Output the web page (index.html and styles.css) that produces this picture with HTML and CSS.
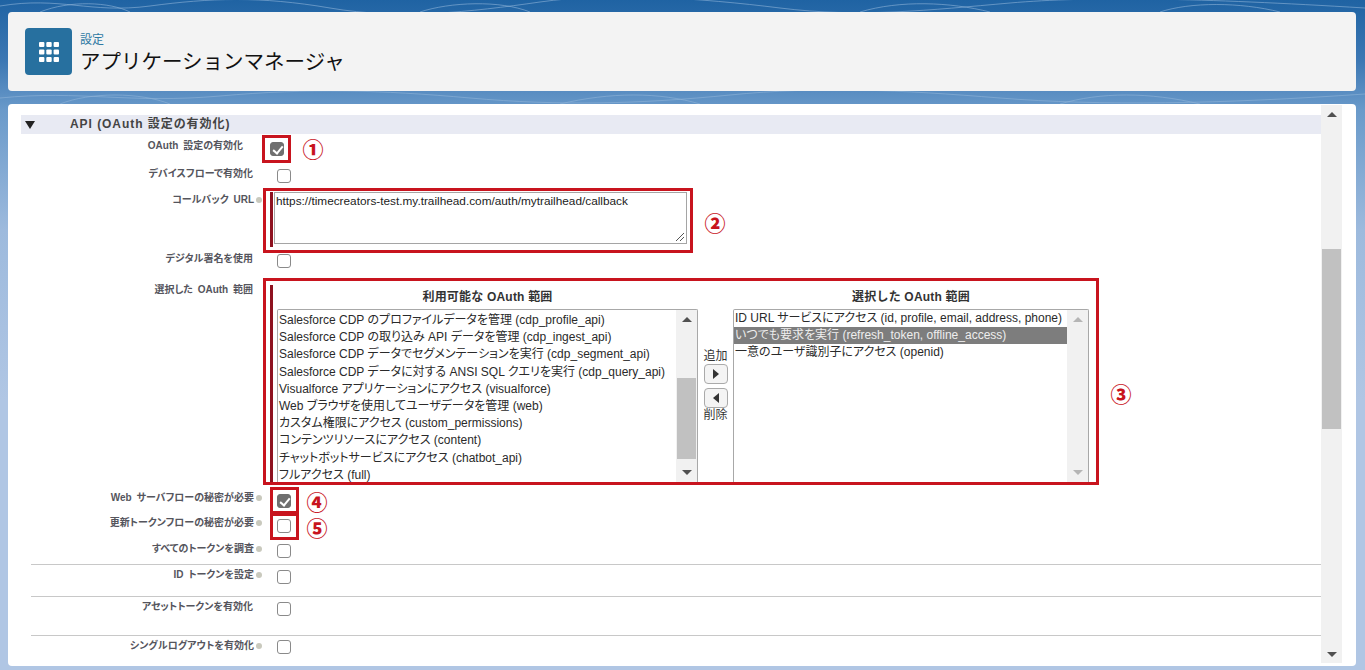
FILE: index.html
```html
<!DOCTYPE html>
<html lang="ja">
<head>
    <meta charset="UTF-8">
    <meta name="viewport" content="width=device-width, initial-scale=1.0">
    <title>アプリケーションマネージャ</title>
    <link rel="stylesheet" href="styles.css">
</head>
<body>
    <svg class="contours" width="1365" height="670" viewBox="0 0 1365 670" aria-hidden="true">
        <path d="M0 6 C60 -4 90 14 150 6 S260 -4 330 8 S470 12 540 2 S700 -2 780 8 S930 10 1010 3 S1200 -2 1365 8"/>
        <path d="M40 12 C70 0 110 2 130 12 M420 12 C450 2 500 0 530 12 M860 12 C900 0 950 2 990 12 M1160 12 C1190 2 1240 2 1280 12"/>
        <path d="M0 98 C80 90 130 104 220 96 S380 90 470 98 S640 104 730 95 S900 90 1000 98 S1220 104 1365 94"/>
        <path d="M60 104 C90 92 140 92 170 104 M560 104 C610 92 660 92 700 104 M1060 104 C1100 92 1150 92 1200 104"/>
    </svg>
    <div class="page">
        <div class="page-header">
            <div class="header-icon">
                <svg width="20" height="20" viewBox="0 0 20 20">
                    <rect x="0" y="0" width="5.4" height="5" rx="1"/><rect x="7.3" y="0" width="5.4" height="5" rx="1"/><rect x="14.6" y="0" width="5.4" height="5" rx="1"/>
                    <rect x="0" y="7.5" width="5.4" height="5" rx="1"/><rect x="7.3" y="7.5" width="5.4" height="5" rx="1"/><rect x="14.6" y="7.5" width="5.4" height="5" rx="1"/>
                    <rect x="0" y="15" width="5.4" height="5" rx="1"/><rect x="7.3" y="15" width="5.4" height="5" rx="1"/><rect x="14.6" y="15" width="5.4" height="5" rx="1"/>
                </svg>
            </div>
            <div>
                <div class="header-sub">設定</div>
                <h1>アプリケーションマネージャ</h1>
            </div>
        </div>

        <div class="main-card">
            <div class="content">
                <div class="section-head">
                    <span class="section-arrow"></span>
                    <span>API (OAuth 設定の有効化)</span>
                </div>

                <div class="row row-oauth">
                    <div class="label">OAuth 設定の有効化</div>
                    <div class="value"><span class="check checked"></span></div>
                </div>
                <div class="row row-device">
                    <div class="label">デバイスフローで有効化</div>
                    <div class="value"><span class="check"></span></div>
                </div>
                <div class="row row-callback">
                    <div class="label">コールバック URL<i class="help"></i></div>
                    <div class="value required">
                        <div class="textarea">https://timecreators-test.my.trailhead.com/auth/mytrailhead/callback
                            <svg class="grip" width="11" height="11" viewBox="0 0 11 11"><path d="M10 2 L2 10 M10 6 L6 10"/></svg>
                        </div>
                    </div>
                </div>
                <div class="row row-signature">
                    <div class="label">デジタル署名を使用</div>
                    <div class="value"><span class="check"></span></div>
                </div>
                <div class="row row-scopes">
                    <div class="label">選択した OAuth 範囲</div>
                    <div class="value required scopes">
                        <div class="scope-col scope-left">
                            <div class="scope-title">利用可能な OAuth 範囲</div>
                            <div class="listbox">
                                <div class="options">
                                    <div>Salesforce CDP のプロファイルデータを管理 (cdp_profile_api)</div>
                                    <div>Salesforce CDP の取り込み API データを管理 (cdp_ingest_api)</div>
                                    <div>Salesforce CDP データでセグメンテーションを実行 (cdp_segment_api)</div>
                                    <div>Salesforce CDP データに対する ANSI SQL クエリを実行 (cdp_query_api)</div>
                                    <div>Visualforce アプリケーションにアクセス (visualforce)</div>
                                    <div>Web ブラウザを使用してユーザデータを管理 (web)</div>
                                    <div>カスタム権限にアクセス (custom_permissions)</div>
                                    <div>コンテンツリソースにアクセス (content)</div>
                                    <div>チャットボットサービスにアクセス (chatbot_api)</div>
                                    <div>フルアクセス (full)</div>
                                </div>
                                <div class="list-scroll">
                                    <span class="arrow-up"></span>
                                    <span class="list-thumb"></span>
                                    <span class="arrow-down"></span>
                                </div>
                            </div>
                        </div>
                        <div class="move-buttons">
                            <div>追加</div>
                            <div class="move-btn"><span class="arrow-right"></span></div>
                            <div class="move-btn"><span class="arrow-left"></span></div>
                            <div>削除</div>
                        </div>
                        <div class="scope-col scope-right">
                            <div class="scope-title">選択した OAuth 範囲</div>
                            <div class="listbox">
                                <div class="options">
                                    <div>ID URL サービスにアクセス (id, profile, email, address, phone)</div>
                                    <div class="selected">いつでも要求を実行 (refresh_token, offline_access)</div>
                                    <div>一意のユーザ識別子にアクセス (openid)</div>
                                </div>
                                <div class="list-scroll disabled">
                                    <span class="arrow-up"></span>
                                    <span class="arrow-down"></span>
                                </div>
                            </div>
                        </div>
                    </div>
                </div>
                <div class="row row-web">
                    <div class="label">Web サーバフローの秘密が必要<i class="help"></i></div>
                    <div class="value"><span class="check checked"></span></div>
                </div>
                <div class="row row-refresh">
                    <div class="label">更新トークンフローの秘密が必要<i class="help"></i></div>
                    <div class="value"><span class="check"></span></div>
                </div>
                <div class="row row-intro divided">
                    <div class="label">すべてのトークンを調査<i class="help"></i></div>
                    <div class="value"><span class="check"></span></div>
                </div>
                <div class="row row-idtoken divided">
                    <div class="label">ID トークンを設定<i class="help"></i></div>
                    <div class="value"><span class="check"></span></div>
                </div>
                <div class="row row-asset divided">
                    <div class="label">アセットトークンを有効化</div>
                    <div class="value"><span class="check"></span></div>
                </div>
                <div class="row row-logout">
                    <div class="label">シングルログアウトを有効化<i class="help"></i></div>
                    <div class="value"><span class="check"></span></div>
                </div>
            </div>

            <div class="page-scroll">
                <span class="arrow-up"></span>
                <span class="page-thumb"></span>
                <span class="arrow-down"></span>
            </div>

            <!-- red annotations drawn over the form -->
            <div class="mark mark-1"></div><div class="num num-1">①</div>
            <div class="mark mark-2"></div><div class="num num-2">②</div>
            <div class="mark mark-3"></div><div class="num num-3">③</div>
            <div class="mark mark-4"></div><div class="num num-4">④</div>
            <div class="mark mark-5"></div><div class="num num-5">⑤</div>
        </div>
    </div>
</body>
</html>
```

FILE: styles.css
```css
html, body {
    height: 100%;
}
body {
    margin: 0;
    height: 670px;
    overflow: hidden;
    position: relative;
    font-family: "Liberation Sans", "Noto Sans CJK JP", sans-serif;
    color: #222;
    background: linear-gradient(180deg, #1f63a3 0, #3c77b3 60px, #6a9aca 110px, #9dbadd 230px, #b0c6e4 400px, #b0c6e4 670px);
}
.contours {
    position: absolute;
    left: 0;
    top: 0;
}
.contours path {
    fill: none;
    stroke: #8fb4d8;
    stroke-width: 1;
    opacity: 0.6;
}
.page {
    position: relative;
    padding: 12px 9px 0 8px;
}

/* header */
.page-header {
    height: 79px;
    box-sizing: border-box;
    padding: 16px 0 0 17px;
    display: flex;
    gap: 8px;
    background-color: #f3f3f3;
    border-radius: 4px;
    margin-bottom: 13px;
}
.header-icon {
    width: 47px;
    height: 47px;
    background-color: #27709f;
    border-radius: 4px;
    display: flex;
    align-items: center;
    justify-content: center;
}
.header-icon svg {
    fill: #fff;
}
.header-sub {
    font-size: 12px;
    line-height: 14px;
    margin-top: 5px;
    color: #2f7aa3;
}
h1 {
    margin: 1px 0 0;
    font-size: 20.5px;
    line-height: 28px;
    font-weight: 400;
    color: #111;
}

/* main card */
.main-card {
    position: relative;
    height: 562px;
    box-sizing: border-box;
    padding: 11px 14px 0 13px;
    display: flex;
    background-color: #fff;
    border-radius: 4px;
    overflow: hidden;
}
.content {
    width: 1300px;
}
.section-head {
    height: 19px;
    display: flex;
    align-items: center;
    background-color: #e8eaf3;
    font-size: 12px;
    line-height: 17px;
    font-weight: bold;
    letter-spacing: 0.95px;
    color: #444;
}
.section-arrow {
    width: 0;
    height: 0;
    margin: 0 35px 0 4px;
    border-left: 5px solid transparent;
    border-right: 5px solid transparent;
    border-top: 8px solid #222;
}

/* form rows */
.row {
    display: flex;
    margin-left: 10px;
    box-sizing: border-box;
}
.label {
    width: 222px;
    padding-top: 1px;
    font-size: 10px;
    line-height: 14px;
    font-weight: bold;
    font-feature-settings: "palt";
    word-spacing: 2px;
    color: #55555d;
    text-align: right;
    white-space: nowrap;
}
.help {
    display: inline-block;
    width: 6px;
    height: 6px;
    margin: 0 -9px 0 2px;
    border-radius: 50%;
    background-color: #c9c9bd;
}
.value {
    margin-left: 24px;
    padding-top: 3px;
}
.divided {
    border-bottom: 1px solid #c8c8c8;
}
.row-oauth { height: 28px; padding-top: 3px; }
.row-oauth .label { padding: 2px 10px 0 0; width: 212px; }
.row-oauth .value { padding-top: 5px; margin-left: 17px; }
.row-device { height: 26px; padding-top: 4px; }
.row-device .value { padding-top: 3px; }
.row-callback { height: 60px; padding-top: 4px; }
.row-signature { height: 30px; padding-top: 3px; }
.row-scopes { height: 208px; padding-top: 4px; }
.row-web { height: 25px; padding-top: 4px; }
.row-web .value { padding-top: 4px; }
.row-refresh { height: 25px; padding-top: 4px; }
.row-refresh .value { padding-top: 4px; }
.row-intro { height: 29px; padding-top: 5px; }
.row-idtoken { height: 32px; padding-top: 2px; }
.row-asset { height: 39px; padding-top: 2px; }
.row-logout { height: 30px; padding-top: 2px; }
.row-logout .value { padding-top: 2px; }

.check {
    display: block;
    position: relative;
    width: 12px;
    height: 12px;
    border: 1px solid #8a8a8a;
    border-radius: 3px;
    background-color: #fff;
}
.check.checked {
    background-color: #6f6f6f;
    border-color: #6f6f6f;
}
.check.checked::after {
    content: "";
    position: absolute;
    left: 3.5px;
    top: 0.5px;
    width: 4px;
    height: 8px;
    border: solid #fff;
    border-width: 0 2px 2px 0;
    transform: rotate(40deg);
}
.required {
    border-left: 3px solid #8e1220;
    margin-left: 17px;
}
.row-callback .required {
    padding: 0 0 0 1px;
    height: 55px;
}
.textarea {
    position: relative;
    width: 411px;
    height: 49px;
    border: 1px solid #a5a5a5;
    font-size: 11.8px;
    line-height: 14px;
    padding: 0;
    padding-top: 1px;
    text-indent: 1px;
    color: #222;
}
.grip {
    position: absolute;
    right: 1px;
    bottom: 1px;
}
.grip path {
    stroke: #555;
    stroke-width: 1;
    fill: none;
}

/* scope picker */
.scopes {
    display: flex;
    height: 197px;
    margin-top: 3px;
    padding: 0 0 0 4px;
}
.scope-col {
    flex: none;
}
.scope-left { width: 421px; }
.scope-right { width: 356px; }
.scope-title {
    height: 24px;
    padding-top: 5px;
    box-sizing: border-box;
    text-align: center;
    font-size: 12px;
    line-height: 15px;
    font-weight: bold;
    letter-spacing: 0.2px;
    color: #333;
}
.listbox {
    display: flex;
    height: 173px;
    box-sizing: border-box;
    border: 1px solid #a8a8a8;
    border-bottom: none;
    border-radius: 2px 2px 0 0;
    overflow: hidden;
}
.options {
    flex: 1;
    min-width: 0;
    padding-top: 2px;
    font-size: 12px;
    line-height: 17.2px;
    font-feature-settings: "palt";
    white-space: nowrap;
    overflow: hidden;
    color: #2a2a2a;
}
.scope-right .options {
    padding-top: 0;
}
.options div {
    padding-left: 1px;
}
.options .selected {
    background-color: #7d7d7d;
    color: #eee;
}
.list-scroll {
    position: relative;
    flex: none;
    width: 21px;
    background-color: #f1f1f1;
}
.list-thumb {
    position: absolute;
    left: 1px;
    right: 1px;
    top: 68px;
    height: 81px;
    background-color: #c1c1c1;
}
.arrow-up, .arrow-down {
    position: absolute;
    left: 50%;
    margin-left: -5px;
    width: 0;
    height: 0;
    border-left: 5px solid transparent;
    border-right: 5px solid transparent;
}
.arrow-up {
    top: 7px;
    border-bottom: 5px solid #505050;
}
.arrow-down {
    bottom: 7px;
    border-top: 5px solid #505050;
}
.disabled .arrow-up { border-bottom-color: #b5b5b5; }
.disabled .arrow-down { border-top-color: #b5b5b5; }

.move-buttons {
    flex: none;
    width: 35px;
    padding-top: 65px;
    display: flex;
    flex-direction: column;
    align-items: center;
    gap: 1px;
    font-size: 12px;
    line-height: 13px;
    color: #333;
}
.move-btn {
    width: 24px;
    height: 20px;
    box-sizing: border-box;
    display: flex;
    align-items: center;
    justify-content: center;
    border: 1px solid #aaa;
    border-radius: 4px;
    background-color: #f4f4f4;
}
.move-btn + .move-btn {
    margin-top: 3px;
}
.arrow-right, .arrow-left {
    width: 0;
    height: 0;
    border-top: 5px solid transparent;
    border-bottom: 5px solid transparent;
}
.arrow-right { border-left: 6px solid #333; }
.arrow-left { border-right: 6px solid #333; }

/* outer scrollbar */
.page-scroll {
    position: relative;
    flex: none;
    width: 21px;
    height: 558px;
    margin-top: -10px;
    background-color: #f1f1f1;
}
.page-thumb {
    position: absolute;
    left: 1px;
    right: 1px;
    top: 144px;
    height: 180px;
    background-color: #c1c1c1;
}
.page-scroll .arrow-up { top: 7px; }
.page-scroll .arrow-down { bottom: 6px; }

/* annotations, coordinates are relative to the main card */
.mark {
    position: absolute;
    box-sizing: border-box;
    border: 3px solid #c8141e;
}
.mark-1 { left: 254px; top: 31px; width: 29px; height: 28px; }
.mark-2 { left: 255px; top: 84px; width: 430px; height: 65px; }
.mark-3 { left: 255px; top: 174px; width: 836px; height: 207px; }
.mark-4 { left: 262px; top: 383px; width: 29px; height: 27px; }
.mark-5 { left: 262px; top: 409px; width: 29px; height: 27px; }
.num {
    position: absolute;
    width: 24px;
    text-align: center;
    font-family: "Noto Sans CJK JP", sans-serif;
    font-size: 21px;
    line-height: 24px;
    font-weight: 900;
    color: #c8141e;
}
.num-1 { left: 293px; top: 32px; }
.num-2 { left: 695px; top: 106px; }
.num-3 { left: 1101px; top: 277px; }
.num-4 { left: 297px; top: 385px; }
.num-5 { left: 297px; top: 411px; }
```
